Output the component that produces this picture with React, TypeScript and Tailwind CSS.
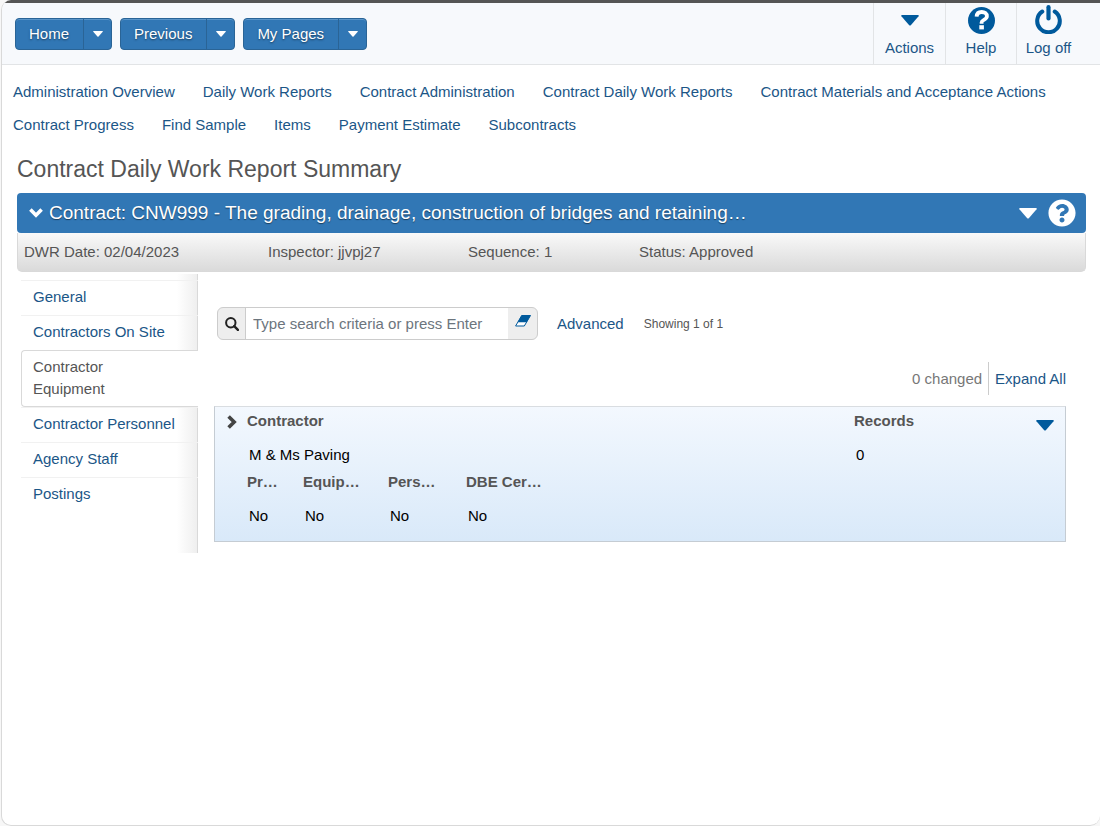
import type { ReactNode } from "react";
import { FaQuestionCircle } from "react-icons/fa";

const quickMenus = ["Home", "Previous", "My Pages"];

const links = [
  "Administration Overview",
  "Daily Work Reports",
  "Contract Administration",
  "Contract Daily Work Reports",
  "Contract Materials and Acceptance Actions",
  "Contract Progress",
  "Find Sample",
  "Items",
  "Payment Estimate",
  "Subcontracts",
];

const tabsBefore = ["General", "Contractors On Site"];
const tabsAfter = ["Contractor Personnel", "Agency Staff", "Postings"];

function Caret({ className }: { className: string }) {
  return (
    <svg viewBox="0 0 18 11" className={className} fill="currentColor" aria-hidden="true">
      <path d="M1 0h16q1.400 0 .6 1.200L10 9.900q-1 1-2 0L.4 1.200Q-.4 0 1 0z" />
    </svg>
  );
}

function Chevron({ className }: { className: string }) {
  return (
    <svg viewBox="0 0 14 10" className={className} fill="none" stroke="currentColor" strokeWidth="3.600" aria-hidden="true">
      <path d="M1.400 1.600 7 7.200l5.600-5.600" />
    </svg>
  );
}

function SearchIcon() {
  return (
    <svg viewBox="0 0 14 14" className="size-3.5" fill="none" stroke="currentColor" aria-hidden="true">
      <circle cx="5.800" cy="5.800" r="4.700" strokeWidth="2" />
      <path d="m9.200 9.200 3.700 3.700" strokeWidth="2.400" strokeLinecap="round" />
    </svg>
  );
}

function EraserIcon() {
  return (
    <svg viewBox="0 0 16 12" className="h-3 w-4" aria-hidden="true">
      <path d="M6.700.5h8.800L9.300 11H.6z" fill="#fff" stroke="#005a9c" strokeLinejoin="round" />
      <path d="M6.700.2h9L11.700 7.200H2.600z" fill="#005a9c" />
    </svg>
  );
}

function HelpIcon() {
  return (
    <svg viewBox="0 0 27 27" className="size-[27px]" aria-hidden="true">
      <circle cx="13.500" cy="13.500" r="13.500" fill="#005a9c" />
      <path
        d="M8.600 9.700C8.800 6.400 10.700 5 13.700 5c3 0 5.200 1.500 5.200 4.300 0 3.600-5.300 3.400-5.300 6.100v1.300"
        fill="none"
        stroke="#fff"
        strokeWidth="3.800"
      />
      <path d="M11.300 18.200h4.600v4.200h-4.600z" fill="#fff" />
    </svg>
  );
}

function PowerIcon() {
  return (
    <svg viewBox="0 0 27 29" className="mb-0.5 h-[29px] w-[27px]" fill="none" stroke="#005a9c" strokeLinecap="round" aria-hidden="true">
      <path d="M7.300 6.500a11.300 11.300 0 1 0 12.400 0" strokeWidth="4" />
      <path d="M13.500 2.200v11.200" strokeWidth="4.200" />
    </svg>
  );
}

function SplitButton({ label }: { label: string }) {
  return (
    <div className="flex h-8 rounded border border-[#2a6496] bg-[#3177b5] text-white shadow-[inset_0_1px_0_#5a95c9]">
      <button type="button" className="border-r border-[#2a6496] pr-3.5 pl-[13px] [text-shadow:0_1px_2px_#1a3d5c]">
        {label}
      </button>
      <button type="button" aria-label={`${label} menu`} className="flex w-[27px] items-center justify-center">
        <Caret className="h-1.5 w-2.5" />
      </button>
    </div>
  );
}

function HeaderAction({ label, className, children }: { label: string; className: string; children: ReactNode }) {
  return (
    <button
      type="button"
      className={`flex flex-col items-center border-l border-[#e2e4e6] pt-0.5 text-[#1b5687] ${className}`}
    >
      <span className="flex h-[31px] items-center text-[#005a9c]">{children}</span>
      <span className="leading-6">{label}</span>
    </button>
  );
}

function Tab({ label }: { label: string }) {
  return (
    <li className="border-t border-[#f1f1f1] pt-[5px] pr-2 pb-[7px] pl-3">
      <a href="#" className="text-[#1b5687]">
        {label}
      </a>
    </li>
  );
}

function Field({ label, value, className }: { label: string; value: string; className: string }) {
  return (
    <div className={className}>
      <dt className="font-bold text-[#555]">{label}</dt>
      <dd className="mt-3 ml-0.5 text-black">{value}</dd>
    </div>
  );
}

export default function App() {
  return (
    <div className="min-h-screen bg-[#f7f7f7] pl-px font-['Liberation_Sans',Arial,sans-serif] text-[15px] leading-[22px] text-[#555]">
      <div className="min-h-screen overflow-hidden rounded-[10px] rounded-tr-none border-b border-l border-[#d9d9d9] bg-white">
        <header className="flex h-[65px] justify-between border-t-3 border-b border-t-[#555] border-b-[#e2e4e6] bg-[#f7f9fc]">
          <nav className="flex items-start gap-2 pt-[15px] pl-[13px]">
            {quickMenus.map((label) => (
              <SplitButton key={label} label={label} />
            ))}
          </nav>
          <div className="flex pr-5">
            <HeaderAction label="Actions" className="w-[72px]">
              <Caret className="h-[11px] w-[18px]" />
            </HeaderAction>
            <HeaderAction label="Help" className="w-[71px]">
              <HelpIcon />
            </HeaderAction>
            <HeaderAction label="Log off" className="w-16">
              <PowerIcon />
            </HeaderAction>
          </div>
        </header>

        <nav className="flex flex-wrap gap-x-7 pt-2.5 pl-[11px] leading-[33px]">
          {links.map((label) => (
            <a key={label} href="#" className="text-[#1b5687]">
              {label}
            </a>
          ))}
        </nav>

        <main className="pr-3.5 pl-[15px]">
          <h1 className="mt-3 text-[23px] leading-8">Contract Daily Work Report Summary</h1>

          <section className="mt-2">
            <div className="flex h-10 items-center rounded bg-[#3177b5] pr-2.5 pl-3 text-white">
              <Chevron className="mr-1.5 h-2.5 w-3.5" />
              <h2 className="flex-1 text-[19px] [text-shadow:0_1px_1px_#1a3d5c]">
                Contract: CNW999 - The grading, drainage, construction of bridges and retaining…
              </h2>
              <button type="button" aria-label="Contract actions" className="mr-[11px]">
                <Caret className="h-[11px] w-[18px]" />
              </button>
              <button type="button" aria-label="Contract help">
                <FaQuestionCircle className="size-7" />
              </button>
            </div>
            <div className="flex h-[39px] items-center rounded-b-[5px] border-x border-b border-[#d9d9d9] bg-linear-to-b from-[#f9f9f9] to-[#dadada] pl-1.5">
              <span className="w-[244px]">DWR Date: 02/04/2023</span>
              <span className="w-[200px]">Inspector: jjvpj27</span>
              <span className="w-[171px]">Sequence: 1</span>
              <span>Status: Approved</span>
            </div>
          </section>

          <div className="mt-0.5 flex items-start pl-1">
            <nav className="h-[279px] w-[177px] shrink-0 bg-linear-to-r from-white from-88% to-[#eee] shadow-[inset_-1px_0_0_#d9d9d9]">
              <ul className="pt-1.5">
                {tabsBefore.map((label) => (
                  <Tab key={label} label={label} />
                ))}
                <li className="rounded-l border border-r-0 border-[#d9d9d9] bg-white pt-[5px] pr-16 pb-1.5 pl-[11px]">
                  <a href="#" aria-current="page">
                    Contractor Equipment
                  </a>
                </li>
                {tabsAfter.map((label) => (
                  <Tab key={label} label={label} />
                ))}
              </ul>
            </nav>

            <div className="min-w-0 flex-1 pt-[33px] pr-5 pl-4">
              <div className="flex items-center pl-[3px]">
                <form role="search" className="flex h-[33px] w-[321px] overflow-hidden rounded-md border border-[#ccc] bg-[#eee]">
                  <label htmlFor="criteria" aria-label="Search" className="flex w-7 items-center justify-center border-r border-[#ccc] text-[#222]">
                    <SearchIcon />
                  </label>
                  <input
                    id="criteria"
                    type="text"
                    placeholder="Type search criteria or press Enter"
                    className="min-w-0 flex-1 bg-white px-[7px] placeholder:text-[#6c757d]"
                  />
                  <button type="button" aria-label="Clear search" className="flex w-[29px] justify-center pt-[7px]">
                    <EraserIcon />
                  </button>
                </form>
                <a href="#" className="ml-[19px] text-[#1b5687]">
                  Advanced
                </a>
                <span className="ml-5 text-xs">Showing 1 of 1</span>
              </div>

              <div className="mt-[22px] flex h-[33px] items-center justify-end">
                <span className="pr-1.5 text-[#777]">0 changed</span>
                <a href="#" className="border-l border-[#ccc] pl-1.5 leading-[33px] text-[#1b5687]">
                  Expand All
                </a>
              </div>

              <article className="mt-[11px] flex h-[136px] items-start border border-[#c5ccd3] border-t-[#d9dde1] bg-linear-to-b from-[#f3f8fe] to-[#d9e9f9] pt-[3px] pr-[11px] pl-2.5">
                <button type="button" aria-label="Expand M & Ms Paving" className="mt-[5px] flex h-3.5 w-3.5 items-center justify-center text-[#444]">
                  <Chevron className="h-2.5 w-3.5 shrink-0 -rotate-90" />
                </button>
                <div className="min-w-0 flex-1 pl-2">
                  <dl className="flex">
                    <Field label="Contractor" value="M & Ms Paving" className="flex-1" />
                    <Field label="Records" value="0" className="w-[182px]" />
                  </dl>
                  <dl className="mt-[5px] flex">
                    <Field label="Pr…" value="No" className="w-14" />
                    <Field label="Equip…" value="No" className="w-[85px]" />
                    <Field label="Pers…" value="No" className="w-[78px]" />
                    <Field label="DBE Cer…" value="No" className="w-24" />
                  </dl>
                </div>
                <button type="button" aria-label="Contractor actions" className="mt-2.5 text-[#005a9c]">
                  <Caret className="h-[11px] w-[18px]" />
                </button>
              </article>
            </div>
          </div>
        </main>
      </div>
    </div>
  );
}
